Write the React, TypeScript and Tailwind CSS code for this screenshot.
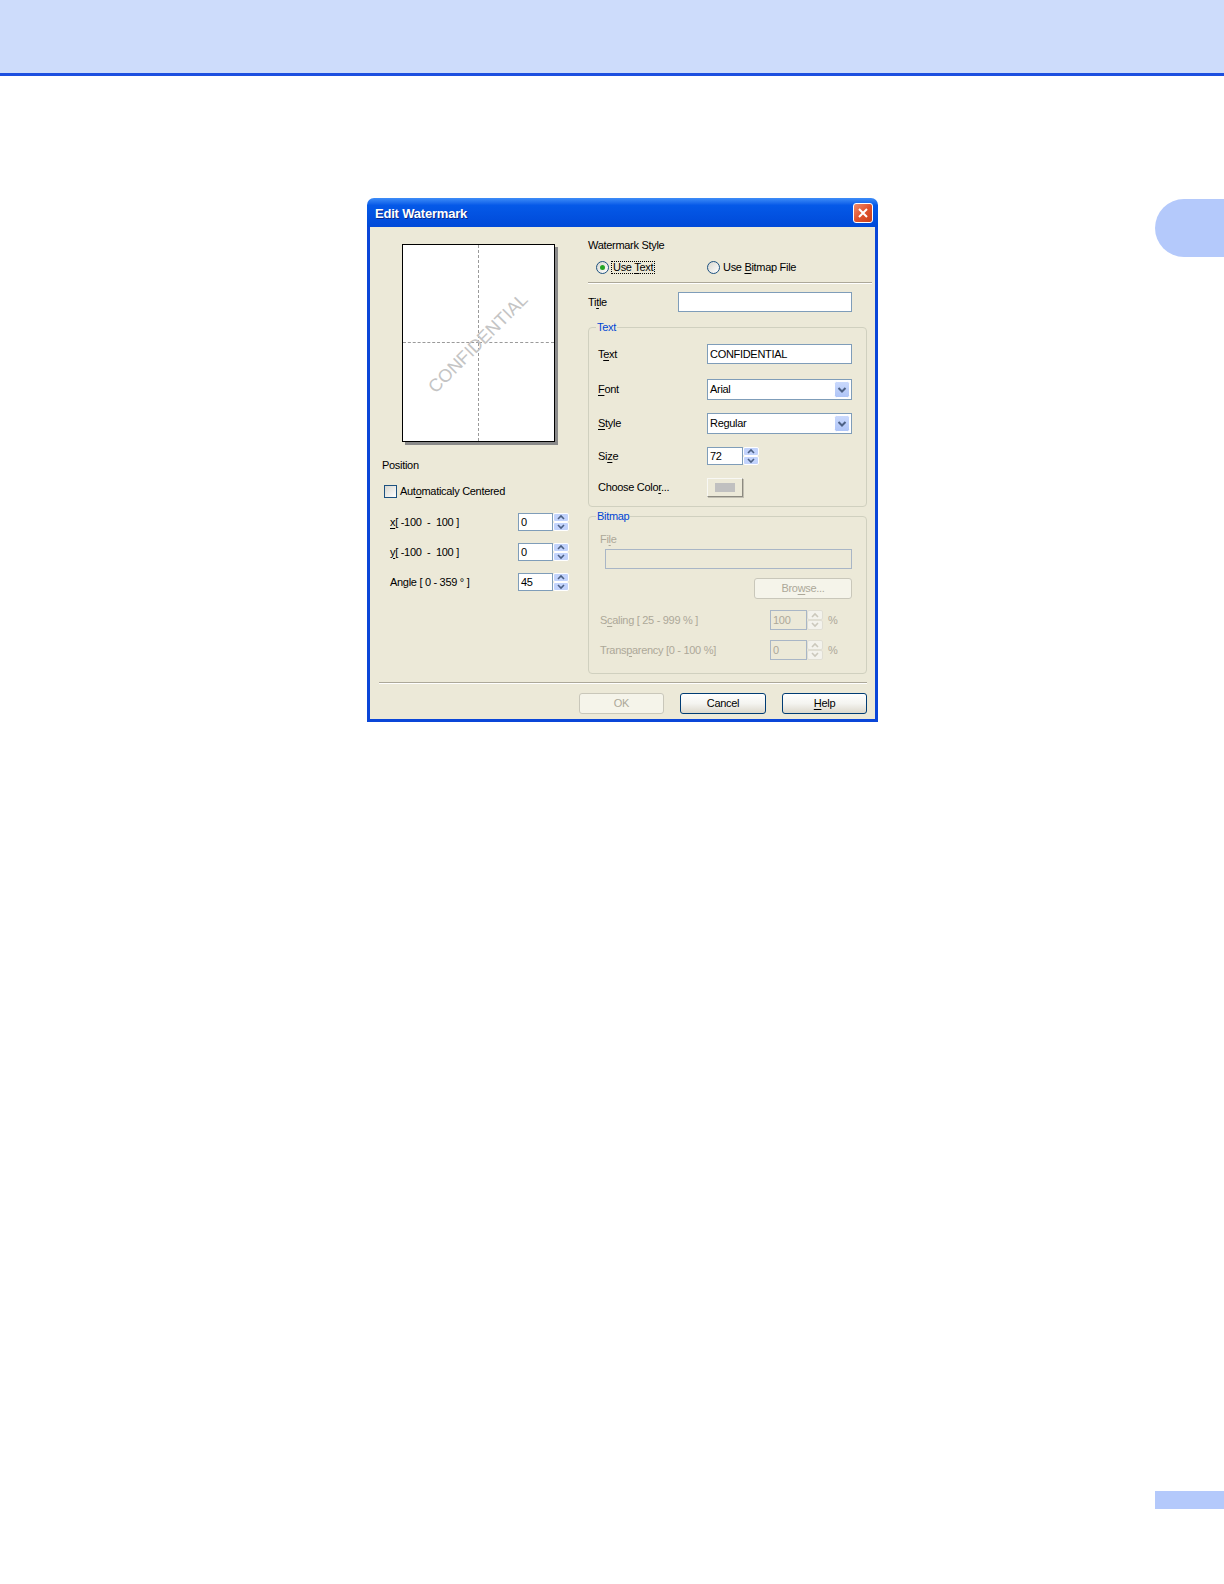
import React from "react"

const U = ({ children }: { children: React.ReactNode }) => (
  <span className="underline underline-offset-[2px] decoration-1">{children}</span>
)

function Spinner({ h = 18, disabled = false }: { h?: number; disabled?: boolean }) {
  const half = h / 2
  const fill = disabled ? "#f3f2ec" : "#c2d3fc"
  const edge = disabled ? "#e0ded3" : "#ffffff"
  const arrow = disabled ? "#cbc8bc" : "#4d6185"
  return (
    <svg width="16" height={h} viewBox={`0 0 16 ${h}`} className="shrink-0">
      <rect x="0.5" y="0.5" width="15" height={half - 1} rx="1.5" fill={fill} stroke={edge} />
      <rect x="0.5" y={half + 0.5} width="15" height={half - 1} rx="1.5" fill={fill} stroke={edge} />
      <path d={`M5 ${half - 3} L8 ${half - 6} L11 ${half - 3}`} stroke={arrow} strokeWidth="1.6" fill="none" />
      <path d={`M5 ${half + 3} L8 ${half + 6} L11 ${half + 3}`} stroke={arrow} strokeWidth="1.6" fill="none" />
    </svg>
  )
}

function Edit({ w, h = 20, value = "", disabled = false }: { w: number; h?: number; value?: string; disabled?: boolean }) {
  return (
    <div
      className={`flex items-center px-[2px] border ${
        disabled ? "bg-[#ece9d8] border-[#a9b6c6] text-[#aca899]" : "bg-white border-[#7f9db9] text-black"
      }`}
      style={{ width: w, height: h }}
    >
      {value}
    </div>
  )
}

function SpinBox({ value, w = 35, h = 18, disabled = false }: { value: string; w?: number; h?: number; disabled?: boolean }) {
  return (
    <div className="flex items-center">
      <Edit w={w} h={h} value={value} disabled={disabled} />
      <Spinner h={h} disabled={disabled} />
    </div>
  )
}

function Combo({ value }: { value: string }) {
  return (
    <div className="w-[145px] h-[21px] border border-[#7f9db9] bg-white flex items-center justify-between pl-[2px] pr-[1px]">
      <span>{value}</span>
      <svg width="16" height="17" viewBox="0 0 16 17">
        <defs>
          <linearGradient id="cb" x1="0" y1="0" x2="0" y2="1">
            <stop offset="0" stopColor="#cbdafd" />
            <stop offset="1" stopColor="#aec4f7" />
          </linearGradient>
        </defs>
        <rect x="0.5" y="0.5" width="15" height="16" rx="2" fill="url(#cb)" stroke="#ffffff" />
        <path d="M4.5 7 L8 10.5 L11.5 7" stroke="#4d6185" strokeWidth="2" fill="none" />
      </svg>
    </div>
  )
}

function Radio({ checked = false }: { checked?: boolean }) {
  return (
    <span className="w-[13px] h-[13px] rounded-full border border-[#1c5180] bg-gradient-to-br from-[#d8d7cf] to-white flex items-center justify-center shrink-0">
      {checked && <span className="w-[5px] h-[5px] rounded-full bg-[#24a524]" />}
    </span>
  )
}

function Button({ w, children, disabled = false }: { w: number; children: React.ReactNode; disabled?: boolean }) {
  return (
    <div
      className={`h-[21px] rounded-[3px] border flex items-center justify-center ${
        disabled
          ? "border-[#c9c7ba] bg-[#f5f4ea] text-[#aca899]"
          : "border-[#003c74] bg-gradient-to-b from-white via-[#f4f4f0] to-[#dcd8cc] text-black"
      }`}
      style={{ width: w }}
    >
      {children}
    </div>
  )
}

export default function App() {
  return (
    <div className="relative w-full min-h-[1584px] bg-white font-['Liberation_Sans',Arial,sans-serif] text-[11px] leading-[13px] tracking-[-0.3px] text-black">
      <div className="h-[76px] bg-[#cddcfb] border-b-[3px] border-[#1c4fe0]" />

      <div className="absolute left-[1155px] top-[199px] w-[69px] h-[58px] rounded-l-full bg-[#b4c9fb]" />
      <div className="absolute left-[1155px] top-[1491px] w-[69px] h-[18px] bg-[#b4c9fb]" />

      {/* dialog */}
      <div className="ml-[367px] mt-[122px] w-[511px]">
        <div className="h-[29px] rounded-t-[7px] bg-gradient-to-b from-[#3d8cf7] via-[#0559e8] via-25% to-[#0049d8] flex items-center justify-between pl-[8px] pr-[5px]">
          <span className="text-white font-bold text-[13px] tracking-[-0.2px] pt-[1px] [text-shadow:1px_1px_0_#0a2a8a]">
            Edit Watermark
          </span>
          <div className="w-[20px] h-[20px] rounded-[3px] border border-white bg-gradient-to-br from-[#f08b6b] via-[#e0532d] to-[#c8401c] flex items-center justify-center">
            <svg width="12" height="12" viewBox="0 0 12 12">
              <path d="M2 2 L10 10 M10 2 L2 10" stroke="#ffffff" strokeWidth="2" />
            </svg>
          </div>
        </div>

        <div className="border-x-[3px] border-b-[3px] border-[#0a46d8] bg-[#ece9d8] pb-[5px]">
          <div className="flex">
            {/* left column */}
            <div className="w-[218px] pl-[12px]">
              <div className="mt-[17px] ml-[20px] w-[153px] h-[198px] border border-black bg-white shadow-[3px_3px_0_0_#8a8a8a] relative grid grid-cols-2 grid-rows-2">
                <div className="border-r border-b border-dashed border-[#9a9a9a]" />
                <div className="border-b border-dashed border-[#9a9a9a]" />
                <div className="border-r border-dashed border-[#9a9a9a]" />
                <div />
                <div className="absolute inset-0 flex items-center justify-center">
                  <span className="-rotate-45 text-[18px] leading-[18px] tracking-normal text-[#c4c4c4]">CONFIDENTIAL</span>
                </div>
              </div>

              <div className="mt-[17px]">Position</div>

              <div className="mt-[13px] ml-[2px] h-[13px] flex items-center gap-[3px]">
                <span className="w-[13px] h-[13px] border border-[#1c5180] bg-gradient-to-br from-[#d8d7cf] to-white" />
                <span>
                  Aut<U>o</U>maticaly Centered
                </span>
              </div>

              <div className="ml-[8px] mt-[15px] flex flex-col gap-[12px]">
                <div className="h-[18px] flex items-center">
                  <span className="w-[128px] whitespace-pre">
                    <U>x</U>[ -100  -  100 ]
                  </span>
                  <SpinBox value="0" />
                </div>
                <div className="h-[18px] flex items-center">
                  <span className="w-[128px] whitespace-pre">
                    <U>y</U>[ -100  -  100 ]
                  </span>
                  <SpinBox value="0" />
                </div>
                <div className="h-[18px] flex items-center">
                  <span className="w-[128px] whitespace-pre">Angle [ 0 - 359 ° ]</span>
                  <SpinBox value="45" />
                </div>
              </div>
            </div>

            {/* right column */}
            <div className="w-[279px]">
              <div className="mt-[12px]">Watermark Style</div>
              <div className="mt-[9px] h-[13px] flex items-center">
                <div className="w-[111px] ml-[8px] flex items-center gap-[2px]">
                  <Radio checked />
                  <span className="border border-dotted border-black px-[1px] leading-[11px]">
                    Use <U>T</U>ext
                  </span>
                </div>
                <div className="flex items-center gap-[3px]">
                  <Radio />
                  <span>
                    Use <U>B</U>itmap File
                  </span>
                </div>
              </div>
              <div className="mt-[8px] w-[284px] border-t border-[#aca899] border-b border-b-white" />

              <div className="mt-[8px] h-[20px] flex items-center">
                <span className="w-[90px]">
                  Ti<U>t</U>le
                </span>
                <Edit w={174} />
              </div>

              <fieldset className="mt-[9px] w-[279px] border border-[#d0d0bf] rounded-[4px] pl-[9px] pb-[9px]">
                <legend className="ml-[-2px] px-[1px] text-[#0046d5]">Text</legend>
                <div className="mt-[10px] h-[20px] flex items-center">
                  <span className="w-[109px]">
                    T<U>e</U>xt
                  </span>
                  <Edit w={145} value="CONFIDENTIAL" />
                </div>
                <div className="mt-[15px] h-[21px] flex items-center">
                  <span className="w-[109px]">
                    <U>F</U>ont
                  </span>
                  <Combo value="Arial" />
                </div>
                <div className="mt-[13px] h-[21px] flex items-center">
                  <span className="w-[109px]">
                    <U>S</U>tyle
                  </span>
                  <Combo value="Regular" />
                </div>
                <div className="mt-[13px] h-[18px] flex items-center">
                  <span className="w-[109px]">
                    Si<U>z</U>e
                  </span>
                  <SpinBox value="72" w={36} />
                </div>
                <div className="mt-[13px] h-[19px] flex items-center">
                  <span className="w-[109px]">
                    Choose Colo<U>r</U>...
                  </span>
                  <div className="w-[36px] h-[19px] border border-[#f8f8f4] border-r-[#8c8a80] border-b-[#8c8a80] bg-[#ece9d8] flex items-center justify-center shadow-[1px_1px_0_0_#c2bfb2]">
                    <span className="w-[20px] h-[9px] bg-[#c0c0c0]" />
                  </div>
                </div>
              </fieldset>

              <fieldset className="mt-[3px] w-[279px] border border-[#d0d0bf] rounded-[4px] pl-[11px] pb-[13px] text-[#aca899]">
                <legend className="ml-[-4px] px-[1px] text-[#0046d5]">Bitmap</legend>
                <div className="mt-[10px]">
                  Fi<U>l</U>e
                </div>
                <div className="mt-[3px] ml-[5px]">
                  <Edit w={247} disabled />
                </div>
                <div className="mt-[9px] ml-[154px]">
                  <Button w={98} disabled>
                    Bro<U>w</U>se...
                  </Button>
                </div>
                <div className="mt-[11px] h-[20px] flex items-center">
                  <span className="w-[170px]">
                    S<U>c</U>aling [ 25 - 999 % ]
                  </span>
                  <SpinBox value="100" w={37} h={20} disabled />
                  <span className="ml-[5px]">%</span>
                </div>
                <div className="mt-[10px] h-[20px] flex items-center">
                  <span className="w-[170px]">
                    Trans<U>p</U>arency [0 - 100 %]
                  </span>
                  <SpinBox value="0" w={37} h={20} disabled />
                  <span className="ml-[5px]">%</span>
                </div>
              </fieldset>
            </div>
          </div>

          <div className="mt-[8px] ml-[9px] mr-[8px] border-t border-[#aca899] border-b border-b-white" />

          <div className="mt-[9px] pr-[8px] flex justify-end gap-[16px]">
            <Button w={85} disabled>
              OK
            </Button>
            <Button w={86}>Cancel</Button>
            <Button w={85}>
              <U>H</U>elp
            </Button>
          </div>
        </div>
      </div>
    </div>
  )
}
